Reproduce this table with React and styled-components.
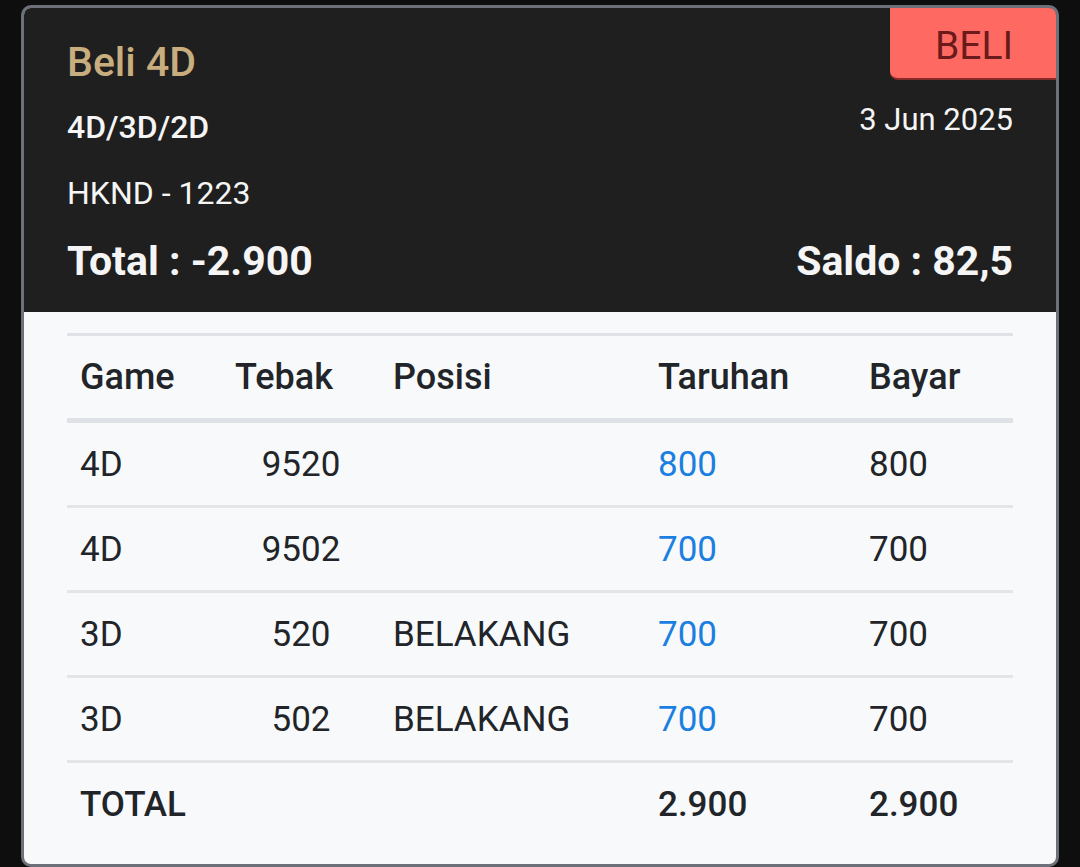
import React from 'react'
import styled, { createGlobalStyle } from 'styled-components'

const GlobalStyle = createGlobalStyle`
    html, body {
        margin: 0;
        padding: 0;
        background: #0e0e0e;
        font-family: Roboto, "Noto Sans", sans-serif;
    }
`

const Page = styled.div`
    padding: 5px 21px 0 21px;
    height: 867px;
    box-sizing: border-box;
    overflow: hidden;
`

const Card = styled.div`
    border: 3px solid #6b7079;
    border-radius: 10px;
    overflow: hidden;
    background: #f8f9fa;
    height: 862px;
    box-sizing: border-box;
`

const Header = styled.div`
    position: relative;
    background: #1f1f1f;
    height: 304px;
    box-sizing: border-box;
    padding: 29px 43px 0 43px;
    display: grid;
    grid-template-columns: 1fr auto;
    grid-template-rows: auto auto auto auto;
    align-items: start;
    align-content: start;
    color: #f5f5f5;
`

const Title = styled.div`
    grid-column: 1;
    grid-row: 1;
    color: #c8ad7f;
    font-size: 41px;
    font-weight: 500;
    line-height: 50px;
`

const SubTitle = styled.div`
    grid-column: 1;
    grid-row: 2;
    font-size: 32px;
    font-weight: 500;
    line-height: 40px;
    margin-top: 20px;
`

const Market = styled.div`
    grid-column: 1;
    grid-row: 3;
    font-size: 32px;
    line-height: 40px;
    margin-top: 26px;
`

const Amount = styled.div`
    grid-column: ${(p) => (p.$right ? 2 : 1)};
    grid-row: 4;
    justify-self: ${(p) => (p.$right ? 'end' : 'start')};
    font-size: 41px;
    font-weight: 700;
    line-height: 50px;
    margin-top: 23px;
`

const DateText = styled.div`
    grid-column: 2;
    grid-row: 2;
    justify-self: end;
    font-size: 31px;
    line-height: 40px;
    margin-top: 13px;
`

const Badge = styled.div`
    position: absolute;
    top: 0;
    right: 0;
    width: 166px;
    height: 72px;
    box-sizing: border-box;
    background: #fe6a61;
    border-bottom: 2px solid #8a2a26;
    border-bottom-left-radius: 8px;
    color: #6a1a1a;
    font-size: 39px;
    line-height: 1;
    display: flex;
    align-items: center;
    justify-content: flex-end;
    padding-right: 43px;
    padding-top: 6px;
`

const Body = styled.div`
    padding: 21px 43px 0 43px;
`

const Table = styled.table`
    width: 100%;
    border-collapse: collapse;
    table-layout: fixed;
    color: #212529;
    border-top: 3px solid #dee2e6;
`

const Th = styled.th`
    text-align: left;
    font-size: 36px;
    font-weight: 500;
    height: 82px;
    padding: 0 13px;
    border-bottom: 5px solid #dee2e6;
`

const Td = styled.td`
    text-align: ${(p) => (p.$center ? 'center' : 'left')};
    font-size: 35px;
    font-weight: ${(p) => (p.$bold ? 500 : 400)};
    color: ${(p) => (p.$blue ? '#1a7fe0' : '#212529')};
    height: 82px;
    padding: 0 13px;
    border-bottom: ${(p) => (p.$last ? 'none' : '3px solid #e3e5e8')};
`

const rows = [
    { game: '4D', tebak: '9520', posisi: '', taruhan: '800', bayar: '800' },
    { game: '4D', tebak: '9502', posisi: '', taruhan: '700', bayar: '700' },
    { game: '3D', tebak: '520', posisi: 'BELAKANG', taruhan: '700', bayar: '700' },
    { game: '3D', tebak: '502', posisi: 'BELAKANG', taruhan: '700', bayar: '700' },
]

const App = () => {
    return (
        <>
            <GlobalStyle />
            <Page>
                <Card>
                    <Header>
                        <Title>Beli 4D</Title>
                        <SubTitle>4D/3D/2D</SubTitle>
                        <DateText>3 Jun 2025</DateText>
                        <Market>HKND - 1223</Market>
                        <Amount>Total : -2.900</Amount>
                        <Amount $right>Saldo : 82,5</Amount>
                        <Badge>BELI</Badge>
                    </Header>
                    <Body>
                        <Table>
                            <colgroup>
                                <col style={{ width: 155 }} />
                                <col style={{ width: 158 }} />
                                <col style={{ width: 265 }} />
                                <col style={{ width: 211 }} />
                                <col />
                            </colgroup>
                            <thead>
                                <tr>
                                    <Th>Game</Th>
                                    <Th>Tebak</Th>
                                    <Th>Posisi</Th>
                                    <Th>Taruhan</Th>
                                    <Th>Bayar</Th>
                                </tr>
                            </thead>
                            <tbody>
                                {rows.map((r, i) => (
                                    <tr key={i}>
                                        <Td>{r.game}</Td>
                                        <Td $center>{r.tebak}</Td>
                                        <Td>{r.posisi}</Td>
                                        <Td $blue>{r.taruhan}</Td>
                                        <Td>{r.bayar}</Td>
                                    </tr>
                                ))}
                                <tr>
                                    <Td $bold $last>TOTAL</Td>
                                    <Td $last />
                                    <Td $last />
                                    <Td $bold $last>2.900</Td>
                                    <Td $bold $last>2.900</Td>
                                </tr>
                            </tbody>
                        </Table>
                    </Body>
                </Card>
            </Page>
        </>
    )
}

export default App
